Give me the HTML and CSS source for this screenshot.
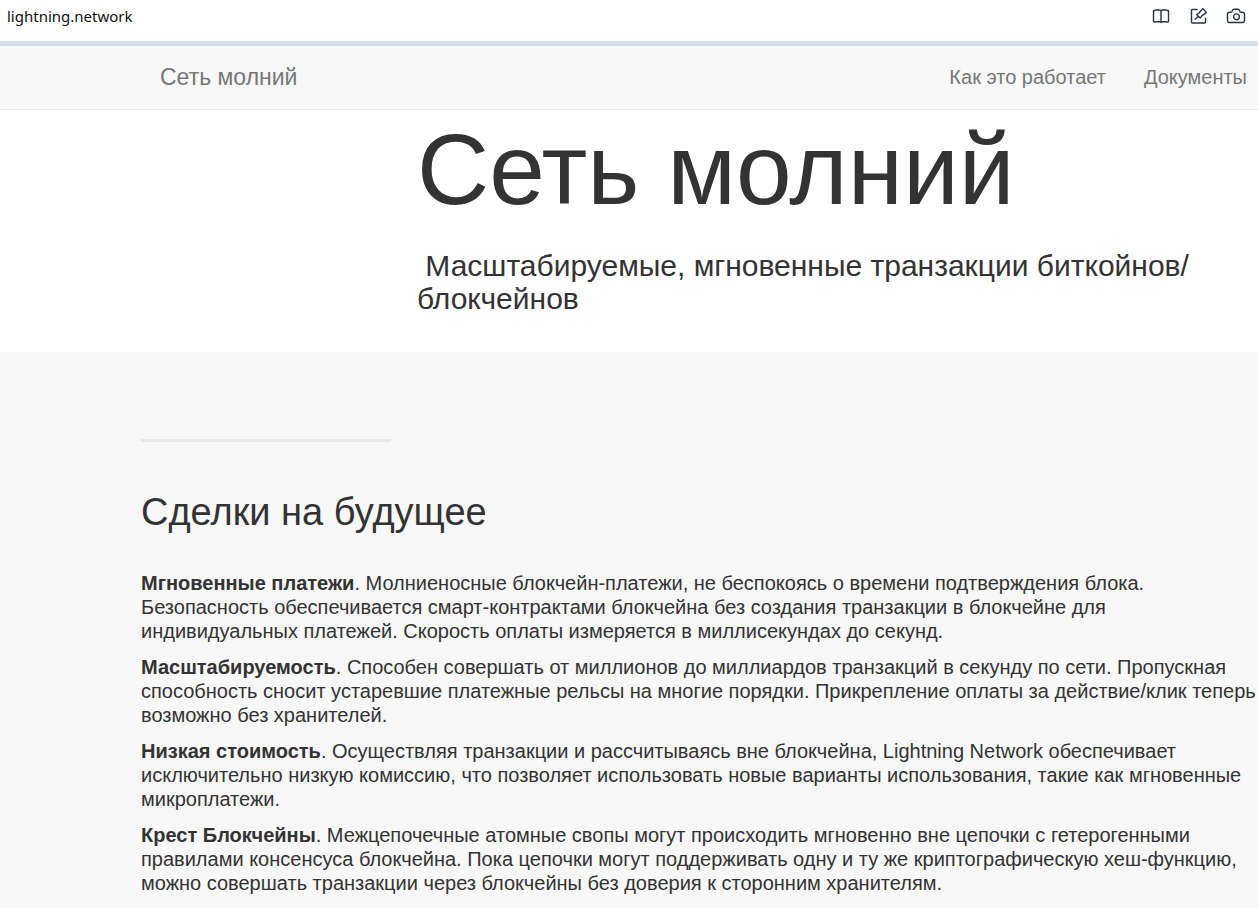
FILE: index.html
```
<!DOCTYPE html>
<html lang="ru">
<head>
<meta charset="utf-8">
<title>Сеть молний</title>
<link rel="stylesheet" href="styles.css">
</head>
<body>
<header class="browser-bar">
  <span class="address">lightning.network</span>
  <div class="tools">
    <button class="tool" type="button" aria-label="Режим чтения"><svg viewBox="0 0 20 20"><path d="M11 5Q10.500 4 9 4H6.500Q5.500 4 4.800 4.500H4.200Q3.500 4.500 3.500 5.200V15.300Q3.500 16 4.200 16H5Q5.700 15.700 6.500 15.700H9Q10.500 15.700 11 16.500Q11.500 15.700 13 15.700H15.500Q16.300 15.700 17 16H17.800Q18.500 16 18.500 15.300V5.200Q18.500 4.500 17.800 4.500H17.200Q16.500 4 15.500 4H13Q11.500 4 11 5V16.500"/></svg></button>
    <button class="tool" type="button" aria-label="Заметка"><svg viewBox="0 0 20 20"><path d="M9 3.500H4.500Q3.500 3.500 3.500 4.500V16Q3.500 17 4.500 17H16.500Q17.500 17 17.500 16V12.500M7.500 13L10.300 10.200M8.600 8.500L12.200 12.100L14 9.600L18 6.900Q18.500 6.400 18 5.900L15.200 3.100Q14.700 2.600 14.200 3.100L11.300 6.800Z"/></svg></button>
    <button class="tool" type="button" aria-label="Снимок"><svg viewBox="0 0 20 20"><path d="M3.500 6.300H5Q6 6.300 6.200 5.200Q6.500 3.200 8 3.200H12Q13.500 3.200 13.800 5.200Q14 6.300 15 6.300H16.500Q18.500 6.300 18.500 8.300V14.500Q18.500 16.500 16.500 16.500H3.500Q1.500 16.500 1.500 14.500V8.300Q1.500 6.300 3.500 6.300Z"/><circle cx="10.500" cy="10.800" r="2.900"/></svg></button>
  </div>
</header>
<nav class="navbar">
  <a class="brand" href="#top">Сеть молний</a>
  <div class="links">
    <a href="#how">Как это работает</a>
    <a href="#docs">Документы</a>
  </div>
</nav>
<main id="top">
  <section class="hero">
    <h1>Сеть молний</h1>
    <p class="tagline">&nbsp;Масштабируемые, мгновенные транзакции биткойнов/<wbr>блокчейнов</p>
  </section>
  <section class="features" id="how">
    <hr class="rule">
    <h2>Сделки на будущее</h2>
    <p><b>Мгновенные платежи</b>. Молниеносные блокчейн-платежи, не беспокоясь о времени подтверждения блока. Безопасность обеспечивается смарт-контрактами блокчейна без создания транзакции в блокчейне для индивидуальных платежей. Скорость оплаты измеряется в миллисекундах до секунд.</p>
    <p><b>Масштабируемость</b>. Способен совершать от миллионов до миллиардов транзакций в секунду по сети. Пропускная способность сносит устаревшие платежные рельсы на многие порядки. Прикрепление оплаты за действие/клик теперь возможно без хранителей.</p>
    <p><b>Низкая стоимость</b>. Осуществляя транзакции и рассчитываясь вне блокчейна, Lightning Network обеспечивает исключительно низкую комиссию, что позволяет использовать новые варианты использования, такие как мгновенные микроплатежи.</p>
    <p><b>Крест Блокчейны</b>. Межцепочечные атомные свопы могут происходить мгновенно вне цепочки с гетерогенными правилами консенсуса блокчейна. Пока цепочки могут поддерживать одну и ту же криптографическую хеш-функцию, можно совершать транзакции через блокчейны без доверия к сторонним хранителям.</p>
  </section>
</main>
</body>
</html>
```
FILE: styles.css
```
* {
  box-sizing: border-box;
}

body {
  margin: 0;
  background: #f8f8f8;
  color: #333;
  font-family: "Liberation Sans", Arial, sans-serif;
  font-size: 20px;
  line-height: 24px;
}

.browser-bar {
  display: flex;
  justify-content: space-between;
  align-items: center;
  padding: 0 12px 10px 7px;
  height: 46px;
  background: #fff;
  border-bottom: 5px solid #d3dfe9;
}

.address {
  color: #111;
  font-family: "Noto Sans", "Open Sans", sans-serif;
  font-size: 15px;
}

.tools {
  display: flex;
  gap: 18px;
}

.tool {
  display: flex;
  padding: 0;
  border: 0;
  background: none;
}

.tool svg {
  width: 20px;
  height: 20px;
  fill: none;
  stroke: #2b3440;
  stroke-width: 1.4;
  stroke-linejoin: round;
  stroke-linecap: round;
}

.navbar {
  display: flex;
  justify-content: space-between;
  align-items: center;
  height: 64px;
  padding: 0 11px 2px 160px;
  border-bottom: 1px solid #e7e7e7;
}

.navbar a {
  color: #777;
  text-decoration: none;
}

.navbar .brand {
  font-size: 23px;
}

.links {
  display: flex;
  gap: 38px;
}

.hero {
  padding: 4px 60px 37px 417px;
  background: #fff;
}

h1 {
  margin: 0;
  font-size: 100px;
  line-height: 110px;
  font-weight: 400;
}

.tagline {
  margin: 25px 0 0;
  font-size: 30px;
  line-height: 33px;
}

.features {
  padding: 87px 0 0 141px;
}

.rule {
  width: 250px;
  height: 3px;
  margin: 0 0 48px;
  border: 0;
  background: #e7e7e7;
}

h2 {
  margin: 0 0 37px;
  font-size: 38px;
  line-height: 44px;
  font-weight: 400;
}

.features p {
  margin: 0 0 12px;
}
```
